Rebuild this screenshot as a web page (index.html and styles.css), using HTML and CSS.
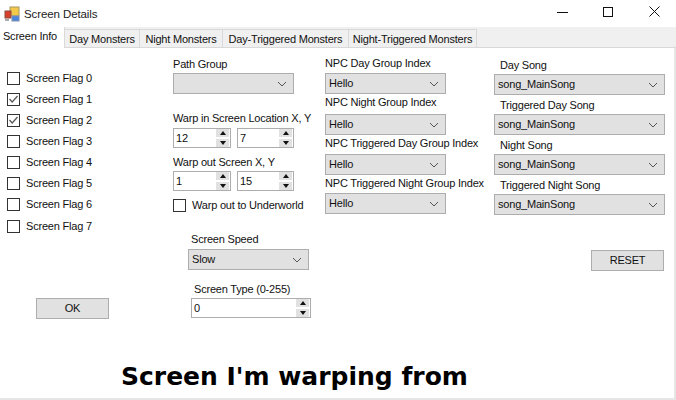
FILE: index.html
```html
<!DOCTYPE html>
<html>
<head>
<meta charset="utf-8">
<title>Screen Details</title>
<link rel="stylesheet" href="styles.css">
</head>
<body>
<div class="window">
  <header class="titlebar">
    <svg class="appicon" width="16" height="16" viewBox="0 0 16 16">
      <rect x="6" y="1" width="9" height="9" fill="#f4c94a" stroke="#a59560"/>
      <rect x="1" y="5" width="6" height="7" fill="#d8402c" stroke="#8a4a40"/>
      <rect x="8" y="10" width="7" height="5" fill="#4a86e0" stroke="#7f90b0"/>
      <rect x="1" y="13" width="4" height="2" fill="#aaa"/>
    </svg>
    <span class="title">Screen Details</span>
    <div class="controls">
      <svg width="12" height="12" viewBox="0 0 12 12"><path d="M0 6.5H11" stroke="#111" fill="none"/></svg>
      <svg width="12" height="12" viewBox="0 0 12 12"><rect x="0.5" y="1.5" width="9" height="9" stroke="#111" fill="none"/></svg>
      <svg width="12" height="12" viewBox="0 0 12 12"><path d="M0.5 0.5L10.5 10.5M10.5 0.5L0.5 10.5" stroke="#111" fill="none"/></svg>
    </div>
  </header>
  <nav class="tabs">
    <div class="tab active">Screen Info</div>
    <div class="tab t2">Day Monsters</div>
    <div class="tab t3">Night Monsters</div>
    <div class="tab t4">Day-Triggered Monsters</div>
    <div class="tab t5">Night-Triggered Monsters</div>
  </nav>
  <main class="panel">
    <div class="columns">
      <section class="col flags">
        <label class="check"><span class="box"></span>Screen Flag 0</label>
        <label class="check"><span class="box"><svg width="11" height="11" viewBox="0 0 11 11"><path d="M1.5 5L4.2 8L9.5 2" stroke="#555" stroke-width="1.2" fill="none"/></svg></span>Screen Flag 1</label>
        <label class="check"><span class="box"><svg width="11" height="11" viewBox="0 0 11 11"><path d="M1.5 5L4.2 8L9.5 2" stroke="#555" stroke-width="1.2" fill="none"/></svg></span>Screen Flag 2</label>
        <label class="check"><span class="box"></span>Screen Flag 3</label>
        <label class="check"><span class="box"></span>Screen Flag 4</label>
        <label class="check"><span class="box"></span>Screen Flag 5</label>
        <label class="check"><span class="box"></span>Screen Flag 6</label>
        <label class="check last"><span class="box"></span>Screen Flag 7</label>
        <button class="btn ok">OK</button>
      </section>
      <section class="col warp">
        <div class="lbl">Path Group</div>
        <div class="combo w121"><span></span><svg class="chev" width="10" height="6" viewBox="0 0 10 6"><path d="M1 1L5 5L9 1" stroke="#555" fill="none"/></svg></div>
        <div class="lbl warpin">Warp in Screen Location X, Y</div>
        <div class="spins">
          <div class="spin w58"><span>12</span><i class="arrows"><b class="up"></b><b class="down"></b></i></div>
          <div class="spin w58"><span>7</span><i class="arrows"><b class="up"></b><b class="down"></b></i></div>
        </div>
        <div class="lbl warpout">Warp out Screen X, Y</div>
        <div class="spins">
          <div class="spin w58"><span>1</span><i class="arrows"><b class="up"></b><b class="down"></b></i></div>
          <div class="spin w58"><span>15</span><i class="arrows"><b class="up"></b><b class="down"></b></i></div>
        </div>
        <label class="check under"><span class="box"></span>Warp out to Underworld</label>
        <div class="lbl speedlbl">Screen Speed</div>
        <div class="combo w121 speed"><span>Slow</span><svg class="chev" width="10" height="6" viewBox="0 0 10 6"><path d="M1 1L5 5L9 1" stroke="#555" fill="none"/></svg></div>
        <div class="lbl typelbl">Screen Type (0-255)</div>
        <div class="spin type"><span>0</span><i class="arrows"><b class="up"></b><b class="down"></b></i></div>
      </section>
      <section class="col npc">
        <div class="lbl">NPC Day Group Index</div>
        <div class="combo w121"><span>Hello</span><svg class="chev" width="10" height="6" viewBox="0 0 10 6"><path d="M1 1L5 5L9 1" stroke="#555" fill="none"/></svg></div>
        <div class="lbl">NPC Night Group Index</div>
        <div class="combo w121"><span>Hello</span><svg class="chev" width="10" height="6" viewBox="0 0 10 6"><path d="M1 1L5 5L9 1" stroke="#555" fill="none"/></svg></div>
        <div class="lbl">NPC Triggered Day Group Index</div>
        <div class="combo w121"><span>Hello</span><svg class="chev" width="10" height="6" viewBox="0 0 10 6"><path d="M1 1L5 5L9 1" stroke="#555" fill="none"/></svg></div>
        <div class="lbl">NPC Triggered Night Group Index</div>
        <div class="combo w121"><span>Hello</span><svg class="chev" width="10" height="6" viewBox="0 0 10 6"><path d="M1 1L5 5L9 1" stroke="#555" fill="none"/></svg></div>
      </section>
      <section class="col songs">
        <div class="lbl">Day Song</div>
        <div class="combo w171"><span>song_MainSong</span><svg class="chev" width="10" height="6" viewBox="0 0 10 6"><path d="M1 1L5 5L9 1" stroke="#555" fill="none"/></svg></div>
        <div class="lbl">Triggered Day Song</div>
        <div class="combo w171"><span>song_MainSong</span><svg class="chev" width="10" height="6" viewBox="0 0 10 6"><path d="M1 1L5 5L9 1" stroke="#555" fill="none"/></svg></div>
        <div class="lbl">Night Song</div>
        <div class="combo w171"><span>song_MainSong</span><svg class="chev" width="10" height="6" viewBox="0 0 10 6"><path d="M1 1L5 5L9 1" stroke="#555" fill="none"/></svg></div>
        <div class="lbl">Triggered Night Song</div>
        <div class="combo w171"><span>song_MainSong</span><svg class="chev" width="10" height="6" viewBox="0 0 10 6"><path d="M1 1L5 5L9 1" stroke="#555" fill="none"/></svg></div>
        <button class="btn reset">RESET</button>
      </section>
    </div>
    <h1 class="caption">Screen I'm warping from</h1>
  </main>
</div>
</body>
</html>
```

FILE: styles.css
```css
* { box-sizing: border-box; }
html, body { margin: 0; padding: 0; overflow: hidden; }
body { width: 676px; height: 400px; background: #fff; font: 11px/13px "Liberation Sans", Arial, sans-serif; letter-spacing: -0.2px; color: #111; white-space: nowrap; }
.window { width: 676px; height: 400px; display: flex; flex-direction: column; }
.titlebar { height: 27px; display: flex; align-items: center; padding: 1px 0 0 4px; flex: none; }
.appicon { flex: none; }
.title { margin-left: 4px; font-size: 11.5px; letter-spacing: -0.1px; color: #222; }
.controls { margin-left: auto; display: flex; gap: 34px; padding-right: 15px; margin-top: -4px; }
.tabs { height: 21px; flex: none; background: #f0f0f0; display: flex; align-items: flex-end; border-bottom: 1px solid #d9d9d9; padding-top: 2px; }
.tab { height: 18px; border: 1px solid #d9d9d9; border-bottom: none; border-left: none; padding-top: 3px; text-align: center; }
.tab.active { width: 65px; height: 21px; background: #fff; margin-bottom: -1px; border: none; border-right: 1px solid #d9d9d9; padding: 3px 4px 0 0; position: relative; }
.t2 { width: 75px; }
.t3 { width: 83px; }
.t4 { width: 126px; }
.t5 { width: 128px; }
.panel { flex: 1; display: flex; flex-direction: column; border-right: 2px solid #e6e6e6; border-bottom: 2px solid #e6e6e6; }
.columns { display: flex; height: 296px; padding-top: 9px; }
.col { display: flex; flex-direction: column; }
.flags { width: 173px; padding: 11px 0 0 7px; }
.check { display: flex; align-items: center; height: 21px; }
.box { width: 13px; height: 13px; border: 1px solid #333; background: #fff; margin-right: 6px; flex: none; display: flex; }
.last { margin-top: 1px; }
.btn { font: inherit; letter-spacing: inherit; background: #e1e1e1; border: 1px solid #adadad; color: #111; padding: 0; width: 73px; height: 21px; }
.ok { margin: 61px 0 0 29px; }
.warp { width: 152px; }
.lbl { height: 16px; line-height: 13px; padding-top: 1px; }
.combo { height: 21px; background: #e1e1e1; border: 1px solid #adadad; display: flex; align-items: center; justify-content: space-between; padding: 0 6px 0 3px; }
.w121 { width: 121px; }
.w171 { width: 171px; }
.warp .warpin { margin-top: 18px; height: 15px; margin-bottom: 1px; padding-top: 0; }
.spins { display: flex; gap: 6px; }
.spin { height: 20px; border: 1px solid #adadad; background: #fff; display: flex; align-items: center; justify-content: space-between; padding-left: 2px; }
.w58 { width: 58px; }
.w58:last-child { width: 57px; }
.arrows { width: 13px; height: 18px; display: flex; flex-direction: column; gap: 2px; margin-right: 1px; background: #fff; }
.arrows b { flex: 1; background: #e1e1e1; position: relative; display: flex; align-items: center; justify-content: center; }
.up::after { content: ""; border: 3px solid transparent; border-top: 0; border-bottom: 4px solid #111; }
.down::after { content: ""; border: 3px solid transparent; border-bottom: 0; border-top: 4px solid #111; }
.warp .warpout { margin-top: 8px; height: 15px; padding-top: 0; }
.under { margin-top: 4px; }
.warp .speedlbl { margin: 17px 0 1px 18px; height: 15px; padding-top: 0; }
.speed { margin-left: 15px; }
.warp .typelbl { margin: 13px 0 0 21px; height: 15px; padding-top: 0; }
.type { width: 120px; margin-left: 18px; }
.npc { width: 169px; }
.npc .lbl { padding-top: 0; }
.npc .combo { margin-bottom: 2px; }
.npc .lbl:nth-child(3) { height: 18px; }
.npc .lbl:nth-child(5) { height: 17px; }
.songs { width: 171px; margin-top: 1px; }
.songs .lbl { padding-left: 6px; padding-top: 1px; }
.songs .combo { margin-bottom: 3px; }
.reset { margin: 32px 0 0 97px; }
.caption { margin: 0 0 0 121px; font: bold 25px/30px "DejaVu Sans", sans-serif; letter-spacing: 0; color: #000; padding-top: 18px; }
```
